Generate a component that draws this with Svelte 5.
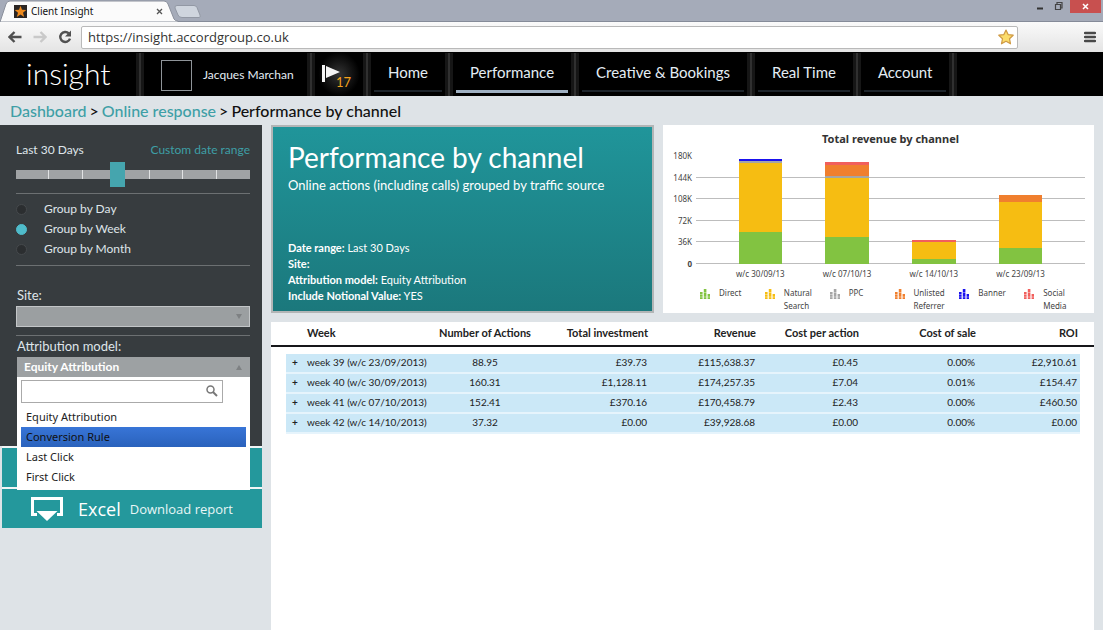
<script lang="ts">
  let url = $state('https://insight.accordgroup.co.uk')
  let range = $state(3)
  let group = $state('Week')
  let search = $state('')
  let open = $state(true)
  let model = $state('Equity Attribution')
  let hovered = $state('Conversion Rule')

  const nav = ['Home', 'Performance', 'Creative & Bookings', 'Real Time', 'Account']
  const models = ['Equity Attribution', 'Conversion Rule', 'Last Click', 'First Click']

  const max = 180
  const ticks = ['180K', '144K', '108K', '72K', '36K', '0']
  const channels = [
    { name: 'Direct', color: '#82c341' },
    { name: 'Natural Search', color: '#f6bd12' },
    { name: 'PPC', color: '#a5a5a5' },
    { name: 'Unlisted Referrer', color: '#f07f2e' },
    { name: 'Banner', color: '#1a12ee' },
    { name: 'Social Media', color: '#f15f5c' }
  ]
  // values in thousands, same order as channels
  const bars = [
    { label: 'w/c 30/09/13', values: [53.5, 114.3, 3.5, 0, 3, 0] },
    { label: 'w/c 07/10/13', values: [45, 98.5, 3.5, 17.5, 0, 6] },
    { label: 'w/c 14/10/13', values: [8.5, 28.4, 0, 0, 0, 3] },
    { label: 'w/c 23/09/13', values: [27.2, 75.5, 0, 13, 0, 0] }
  ]

  const rows = [
    ['week 39 (w/c 23/09/2013)', '88.95', '£39.73', '£115,638.37', '£0.45', '0.00%', '£2,910.61'],
    ['week 40 (w/c 30/09/2013)', '160.31', '£1,128.11', '£174,257.35', '£7.04', '0.01%', '£154.47'],
    ['week 41 (w/c 07/10/2013)', '152.41', '£370.16', '£170,458.79', '£2.43', '0.00%', '£460.50'],
    ['week 42 (w/c 14/10/2013)', '37.32', '£0.00', '£39,928.68', '£0.00', '0.00%', '£0.00']
  ]

  const pick = (m: string) => {
    model = m
    open = false
  }
</script>

<div class="app">
  <div class="tabs">
    <div class="tab">
      <svg class="tab-shape" viewBox="0 0 178 22" width="178" height="22">
        <path d="M0 22 L1 19 L6 4 Q7 1 10 1 L164 1 Q167 1 168 4 L174 19 Q175 21 178 21 L178 22Z" fill="#fbfbfb" stroke="#8b909c" />
      </svg>
      <svg class="fav" viewBox="0 0 13 13" width="13" height="13">
        <rect width="13" height="13" fill="#2b2624" />
        <path d="M6.5 0.8 L8 4.8 L12.2 5 L9 7.7 L10.2 12 L6.5 9.5 L2.8 12 L4 7.7 L0.8 5 L5 4.8Z" fill="#ee8a1d" />
      </svg>
      <span>Client Insight</span>
      <button class="tab-close" aria-label="Close tab">
        <svg viewBox="0 0 7 7" width="7" height="7"><path d="M1 1 L6 6 M6 1 L1 6" stroke="#555" stroke-width="1.3" /></svg>
      </button>
    </div>
    <button class="new-tab" aria-label="New tab">
      <svg viewBox="0 0 28 13" width="28" height="13">
        <path d="M3 0.5 H20 Q22 0.5 23 2.5 L26 10 Q27 12.5 25 12.5 H8 Q5 12.5 4 10 L1 3 Q0.5 0.5 3 0.5Z" fill="#cfd5de" stroke="#9298a4" />
      </svg>
    </button>
    <div class="window">
      <button aria-label="Minimise"><svg viewBox="0 0 7 13" width="7" height="13"><path d="M1 8.5 H7" stroke="#333" stroke-width="2" /></svg></button>
      <button aria-label="Restore">
        <svg viewBox="0 0 9 13" width="9" height="13"><path d="M1.5 4.5 H6.5 V9.5 H1.5Z M3 4 V2.5 H8 V8 H7" fill="none" stroke="#444" stroke-width="1.2" /></svg>
      </button>
      <button class="close" aria-label="Close">
        <svg viewBox="0 0 7 7" width="7" height="7"><path d="M1 1 L6 6 M6 1 L1 6" stroke="#fff" stroke-width="1.5" /></svg>
      </button>
    </div>
  </div>

  <div class="toolbar">
    <button aria-label="Back">
      <svg viewBox="0 0 14 12" width="14" height="12"><path d="M13.5 6 H2 M6.5 1 L1.5 6 L6.5 11" fill="none" stroke="#505050" stroke-width="2.4" /></svg>
    </button>
    <button aria-label="Forward">
      <svg viewBox="0 0 14 12" width="14" height="12"><path d="M0.5 6 H12 M7.5 1 L12.5 6 L7.5 11" fill="none" stroke="#c9c9c9" stroke-width="2.4" /></svg>
    </button>
    <button aria-label="Reload">
      <svg viewBox="0 0 14 14" width="14" height="14">
        <path d="M10.8 3.4 A5 5 0 1 0 12 8.6" fill="none" stroke="#505050" stroke-width="2.4" />
        <path d="M13 0.5 V6.5 H7Z" fill="#505050" />
      </svg>
    </button>
    <div class="address">
      <input type="text" aria-label="Address" bind:value={url} />
      <button aria-label="Bookmark">
        <svg viewBox="0 0 16 16" width="16" height="16">
          <path d="M8 1 L10.1 5.6 L15.2 6.2 L11.5 9.7 L12.5 14.8 L8 12.3 L3.5 14.8 L4.5 9.7 L0.8 6.2 L5.9 5.6Z" fill="#fbdc6b" stroke="#cf9a45" stroke-width="1.2" stroke-linejoin="round" />
        </svg>
      </button>
    </div>
    <button class="menu" aria-label="Menu">
      <svg viewBox="0 0 12 12" width="12" height="12"><path d="M1 2 H11 M1 6 H11 M1 10 H11" stroke="#484848" stroke-width="2.4" stroke-linecap="round" /></svg>
    </button>
  </div>

  <header>
    <a class="logo" href="#home">insight</a>
    <i class="sep"></i>
    <div class="user">
      <span class="avatar"></span>
      <span>Jacques Marchan</span>
    </div>
    <i class="sep"></i>
    <a class="flag" href="#alerts" aria-label="Alerts">
      <svg viewBox="0 0 18 20" width="18" height="20"><path d="M0 1 H3 V18 H0Z M4 2 L18 8 L4 14Z" fill="#f4f4f4" /></svg>
      <b>17</b>
    </a>
    <i class="sep"></i>
    <nav>
      {#each nav as item}
        <a class="item" class:active={item === 'Performance'} href="#{item}">{item}</a>
        <i class="sep"></i>
      {/each}
    </nav>
  </header>

  <div class="crumbs">
    <a href="#dashboard">Dashboard</a>
    <span>&gt;</span>
    <a href="#online">Online response</a>
    <span>&gt;</span>
    <span>Performance by channel</span>
  </div>

  <div class="page">
    <aside>
      <div class="filters">
        <div class="range-head">
          <label for="range">Last 30 Days</label>
          <a href="#custom">Custom date range</a>
        </div>
        <input id="range" class="range" type="range" min="0" max="7" bind:value={range} />
        <div class="groups">
          {#each ['Day', 'Week', 'Month'] as g}
            <label><input type="radio" name="group" value={g} bind:group />Group by {g}</label>
          {/each}
        </div>
        <div class="field site">
          <label for="site">Site:</label>
          <div class="select">
            <select id="site"><option></option></select>
            <svg viewBox="0 0 6 5" width="6" height="5"><path d="M0 0 H6 L3 5Z" fill="#7e8183" /></svg>
          </div>
        </div>
        <div class="field">
          <label for="model">Attribution model:</label>
          <div class="combo">
            <button id="model" class="combo-button" aria-expanded={open} onclick={() => (open = !open)}>
              {model}
              <svg viewBox="0 0 6 5" width="6" height="5"><path d="M0 5 H6 L3 0Z" fill="#7e8183" /></svg>
            </button>
            {#if open}
              <div class="drop">
                <div class="search">
                  <input type="text" aria-label="Search models" bind:value={search} />
                  <svg viewBox="0 0 12 12" width="12" height="12">
                    <circle cx="4.5" cy="4.5" r="3.5" fill="none" stroke="#777" stroke-width="1.5" />
                    <path d="M7 7 L11 11" stroke="#777" stroke-width="2" />
                  </svg>
                </div>
                {#each models as m}
                  <button
                    class="option"
                    class:hovered={m === hovered}
                    onmouseenter={() => (hovered = m)}
                    onclick={() => pick(m)}>{m}</button>
                {/each}
              </div>
            {/if}
          </div>
        </div>
      </div>
      <button class="action" aria-label="Apply"></button>
      <button class="action">
        <svg viewBox="0 0 32 24" width="32" height="24">
          <path d="M6 17.5 H1.5 V1.5 H30.5 V17.5 H26" fill="none" stroke="#fff" stroke-width="3" />
          <path d="M5.5 14 H26.5 L16 24Z" fill="#fff" />
        </svg>
        <strong>Excel</strong>
        <span>Download report</span>
      </button>
    </aside>

    <main>
      <div class="top">
        <section class="banner">
          <h1>Performance by channel</h1>
          <p>Online actions (including calls) grouped by traffic source</p>
          <ul>
            <li><b>Date range:</b> Last 30 Days</li>
            <li><b>Site:</b></li>
            <li><b>Attribution model:</b> {model}</li>
            <li><b>Include Notional Value:</b> YES</li>
          </ul>
        </section>

        <section class="chart">
          <h2>Total revenue by channel</h2>
          <div class="plot">
            <div class="axis">
              {#each ticks as t}
                <span class:zero={t === '0'}>{t}</span>
              {/each}
            </div>
            <div class="area">
              <div class="lines">
                {#each ticks.slice(1) as t}<i></i>{/each}
              </div>
              {#each bars as bar}
                <div class="col">
                  <div class="bar">
                    {#each bar.values as v, i}
                      <div style="height: {(v / max) * 100}%; background: {channels[i].color}"></div>
                    {/each}
                  </div>
                </div>
              {/each}
            </div>
          </div>
          <div class="labels">
            {#each bars as bar}<span>{bar.label}</span>{/each}
          </div>
          <div class="legend">
            {#each channels as c}
              <div>
                <svg viewBox="0 0 10 10" width="10" height="10">
                  <path d="M0 3 H2.6 V10 H0Z M3.8 0 H6.4 V10 H3.8Z M7.6 5 H10 V10 H7.6Z" fill={c.color} />
                  <path d="M0 5.5 H3 M4 3.5 H7 M0 8 H10" stroke="#fff" stroke-width="0.4" />
                </svg>
                <span>{c.name}</span>
              </div>
            {/each}
          </div>
        </section>
      </div>

      <section class="card">
        <table>
          <colgroup>
            <col class="c-plus" /><col class="c-week" /><col class="c-num" /><col class="c-num" />
            <col class="c-rev" /><col class="c-cpa" /><col class="c-sale" /><col class="c-roi" />
          </colgroup>
          <thead>
            <tr>
              <th></th>
              <th class="left">Week</th>
              <th class="mid">Number of Actions</th>
              <th>Total investment</th>
              <th>Revenue</th>
              <th>Cost per action</th>
              <th>Cost of sale</th>
              <th>ROI</th>
            </tr>
          </thead>
          <tbody>
            {#each rows as row}
              <tr>
                <td class="left"><button aria-label="Expand {row[0]}">+</button></td>
                {#each row as cell, i}
                  <td class:left={i === 0} class:mid={i === 1}>{cell}</td>
                {/each}
              </tr>
            {/each}
          </tbody>
        </table>
      </section>
    </main>
  </div>
</div>

<style>
  :global(body) {
    background: #dee3e7;
  }

  .app {
    display: flex;
    flex-direction: column;
    min-height: 100vh;
    font-family: Lato, 'Liberation Sans', sans-serif;
    color: #111;
  }

  .app :global(*) {
    box-sizing: border-box;
  }

  svg {
    display: block;
    flex: none;
  }

  button {
    display: flex;
    align-items: center;
    padding: 0;
    border: 0;
    background: none;
    font: inherit;
    color: inherit;
    cursor: pointer;
  }

  a {
    text-decoration: none;
    color: #3e9fa6;
  }

  /* browser frame */
  .tabs {
    display: flex;
    height: 22px;
    background: #a5abb9;
    border-bottom: 1px solid #858b99;
    font-family: 'Noto Sans', 'Open Sans', sans-serif;
    font-size: 10px;
  }

  .tab {
    position: relative;
    display: flex;
    align-items: center;
    width: 174px;
    height: 22px;
    padding: 0 11px 0 14px;
    gap: 4px;
  }

  .tab-shape {
    position: absolute;
    left: 0;
    top: 0;
  }

  .fav,
  .tab span,
  .tab-close {
    position: relative;
  }

  .tab-close {
    margin-left: auto;
  }

  .new-tab {
    height: 22px;
  }

  .window {
    display: flex;
    gap: 11px;
    height: 13px;
    margin-left: auto;
  }

  .close {
    justify-content: center;
    width: 31px;
    margin: 0 2px 0 -4px;
    background: #c8504f;
  }

  .toolbar {
    display: flex;
    align-items: center;
    gap: 11px;
    height: 30px;
    padding: 0 7px 0 8px;
    background: linear-gradient(#fafafa, #e4e4e4);
  }

  .address {
    display: flex;
    flex: 1;
    align-items: center;
    height: 23px;
    margin: 0 55px 0 -2px;
    padding-right: 3px;
    border: 1px solid #b9b9b9;
    border-radius: 2px;
    background: #fff;
  }

  .address input {
    flex: 1;
    min-width: 0;
    padding: 0 0 1px 6px;
    border: 0;
    outline: 0;
    background: none;
    font-family: 'Open Sans', sans-serif;
    font-size: 13px;
    color: #333;
  }

  /* top navigation */
  header {
    display: flex;
    height: 44px;
    background: #000;
    color: #e4edf4;
  }

  .sep {
    flex: none;
    width: 8px;
    margin: 1px 3px 0;
    background: linear-gradient(90deg, #161616 0 3px, #303030 3px 5px, #161616 5px);
  }

  .logo {
    width: 133px;
    padding-left: 26px;
    font-size: 30px;
    font-weight: 300;
    line-height: 42px;
    color: #fff;
  }

  .user {
    display: flex;
    align-items: center;
    gap: 11px;
    width: 157px;
    padding-left: 14px;
    font-size: 12px;
  }

  .avatar {
    width: 31px;
    height: 31px;
    margin-top: 3px;
    border: 1px solid #8f9499;
  }

  .flag {
    display: flex;
    align-items: center;
    width: 42px;
    padding-left: 4px;
    background: radial-gradient(#333, #000 70%);
  }

  .flag b {
    align-self: flex-end;
    margin: 0 0 6px -4px;
    font-size: 13px;
    font-weight: 400;
    line-height: 16px;
    color: #f5a11c;
  }

  nav {
    display: flex;
  }

  .item {
    height: 40px;
    padding: 0 14px;
    border-bottom: 2px solid #1d242b;
    font-size: 15px;
    line-height: 40px;
    color: #e4edf4;
    white-space: nowrap;
  }

  .active {
    height: 41px;
    border-bottom: 3px solid #9fb0c2;
  }

  .crumbs {
    display: flex;
    gap: 3px;
    height: 29px;
    padding-left: 10px;
    font-size: 16px;
    font-weight: 500;
    line-height: 29px;
  }

  .page {
    display: flex;
    flex: 1;
    gap: 9px;
    padding-right: 9px;
  }

  /* sidebar */
  aside {
    flex: none;
    width: 262px;
  }

  .filters {
    height: 321px;
    padding: 17px 12px 0 16px;
    background: #373c3f;
    font-size: 12px;
    line-height: 16px;
    color: #dfe5ea;
  }

  .range-head {
    display: flex;
    justify-content: space-between;
  }

  .range {
    display: block;
    appearance: none;
    width: 100%;
    height: 25px;
    margin: 4px 0 6px;
    background: none;
  }

  .range::-webkit-slider-runnable-track {
    height: 9px;
    background:
      linear-gradient(#a0a3a5, #a0a3a5) right / 4px 100% no-repeat,
      repeating-linear-gradient(90deg, #a0a3a5 0 calc(100% / 7 - 1px), #e0e2e3 calc(100% / 7 - 1px) calc(100% / 7));
  }

  .range::-webkit-slider-thumb {
    appearance: none;
    width: 15px;
    height: 25px;
    margin-top: -8px;
    background: #45a5ae;
  }

  .groups {
    display: flex;
    flex-direction: column;
    gap: 4px;
    padding: 7px 0 8px;
    border: 1px solid #6c7072;
    border-width: 1px 0;
  }

  .groups label {
    display: flex;
    align-items: center;
    gap: 17px;
  }

  .groups input {
    appearance: none;
    width: 11px;
    height: 11px;
    margin: 0;
    border: 1px solid #45494c;
    border-radius: 50%;
    background: #2b2e30;
  }

  .groups input:checked {
    border-color: #4fbccb;
    background: #4fbccb;
  }

  .field {
    padding-top: 2px;
  }

  .field > label {
    display: block;
    margin: 0 0 3px 1px;
    font-size: 13px;
  }

  .site {
    padding: 21px 0 8px;
    border-bottom: 1px solid #6c7072;
  }

  .select {
    position: relative;
  }

  .select select {
    display: block;
    appearance: none;
    width: 100%;
    height: 21px;
    border: 1px solid #c3c6c8;
    border-radius: 0;
    background: #9b9fa1;
  }

  .select svg {
    position: absolute;
    right: 8px;
    top: 8px;
  }

  .combo {
    position: relative;
    margin-left: 1px;
  }

  .combo-button {
    justify-content: space-between;
    width: 100%;
    height: 20px;
    padding: 0 8px 0 7px;
    background: #9da1a3;
    font-size: 12px;
    font-weight: 700;
    color: #fff;
  }

  .drop {
    position: absolute;
    z-index: 1;
    left: 0;
    right: 0;
    top: 20px;
    padding: 3px 4px;
    background: #fff;
    font-family: 'Noto Sans', 'Open Sans', sans-serif;
    font-size: 11px;
    color: #222;
  }

  .search {
    position: relative;
    width: 202px;
    margin-bottom: 4px;
  }

  .search input {
    display: block;
    width: 100%;
    height: 23px;
    border: 1px solid #aaa;
    background: #fff;
  }

  .search svg {
    position: absolute;
    right: 5px;
    top: 5px;
  }

  .option {
    width: 100%;
    height: 20px;
    padding-left: 5px;
  }

  .hovered {
    background: linear-gradient(#3875d7, #2a62bc);
    color: #111;
  }

  .action {
    width: 260px;
    height: 41px;
    margin-left: 2px;
    padding-left: 29px;
    border-top: 2px solid #f1f5f6;
    background: #24989c;
    font-family: 'Open Sans', sans-serif;
    font-size: 13px;
    color: #e8f6f6;
  }

  .action strong {
    margin: 0 9px 0 15px;
    font-size: 18px;
    font-weight: 400;
    color: #fff;
  }

  /* content */
  main {
    display: flex;
    flex: 1;
    flex-direction: column;
    gap: 9px;
    min-width: 0;
  }

  .top {
    display: grid;
    grid-template-columns: 383fr 431fr;
    gap: 9px;
    height: 188px;
  }

  .banner {
    display: flex;
    flex-direction: column;
    padding: 13px 15px 7px;
    border: 2px solid #b2b5b6;
    background: linear-gradient(#20959a, #1b787c);
    color: #fff;
  }

  h1,
  h2,
  p,
  ul {
    margin: 0;
    padding: 0;
  }

  h1 {
    font-size: 28px;
    font-weight: 400;
    line-height: 34px;
  }

  .banner p {
    font-size: 13px;
    line-height: 22px;
  }

  ul {
    margin-top: auto;
    list-style: none;
    font-size: 11px;
    line-height: 16px;
  }

  .chart {
    padding: 6px 9px 0 9px;
    background: #fff;
    font-family: 'Noto Sans', 'Open Sans', sans-serif;
    font-size: 8px;
    color: #444;
  }

  h2 {
    padding-left: 24px;
    font-size: 11px;
    line-height: 16px;
    text-align: center;
    color: #333;
  }

  .plot {
    display: flex;
    gap: 4px;
    height: 108px;
    margin-top: 9px;
  }

  .axis {
    display: flex;
    flex-direction: column;
    justify-content: space-between;
    width: 20px;
    margin: -6px 0;
    line-height: 12px;
    text-align: right;
  }

  .zero {
    font-weight: 700;
  }

  .area {
    position: relative;
    display: flex;
    flex: 1;
    padding: 0 21px;
  }

  .lines {
    position: absolute;
    inset: 0;
    display: grid;
    grid-template-rows: repeat(5, 1fr);
  }

  .lines i {
    border-bottom: 1px solid #bdbdbd;
  }

  .col {
    position: relative;
    display: flex;
    flex: 1;
    justify-content: center;
  }

  .bar {
    display: flex;
    flex-direction: column-reverse;
    width: 50%;
  }

  .labels {
    display: flex;
    margin-top: 3px;
    padding: 0 21px 0 45px;
    line-height: 14px;
    text-align: center;
  }

  .labels span {
    flex: 1;
  }

  .legend {
    display: grid;
    grid-template-columns: repeat(6, 1fr);
    margin: 5px -4px 0 0;
    padding-left: 28px;
    line-height: 13px;
  }

  .legend div {
    display: flex;
    gap: 9px;
  }

  .legend svg {
    margin-top: 3px;
  }

  .card {
    flex: 1;
    padding: 0 14px 0 15px;
    background: #fff;
  }

  table {
    width: 100%;
    table-layout: fixed;
    border-spacing: 0;
    font-size: 10px;
    line-height: 17px;
    color: #222;
  }

  .c-plus {
    width: 16px;
  }

  .c-week {
    width: 128px;
  }

  .c-num {
    width: 110px;
  }

  .c-rev {
    width: 108px;
  }

  .c-cpa {
    width: 103px;
  }

  .c-sale {
    width: 117px;
  }

  .c-roi {
    width: 102px;
  }

  thead tr {
    position: relative;
  }

  thead tr::after {
    content: '';
    position: absolute;
    left: -15px;
    right: -14px;
    top: 23px;
    height: 2px;
    background: #16171a;
  }

  th {
    height: 32px;
    padding: 0 2px 11px;
    font-size: 11px;
    font-weight: 700;
    text-align: right;
    white-space: nowrap;
  }

  td {
    height: 20px;
    padding: 0 3px 1px;
    border-bottom: 2px solid #e6f4fc;
    background: #cbe8f7;
    text-align: right;
    white-space: nowrap;
  }

  td button {
    padding-left: 4px;
    font-weight: 700;
  }

  .left {
    padding-left: 5px;
    text-align: left;
  }

  td.left:first-child {
    padding: 0 0 1px 2px;
  }

  .mid {
    text-align: center;
  }
</style>
